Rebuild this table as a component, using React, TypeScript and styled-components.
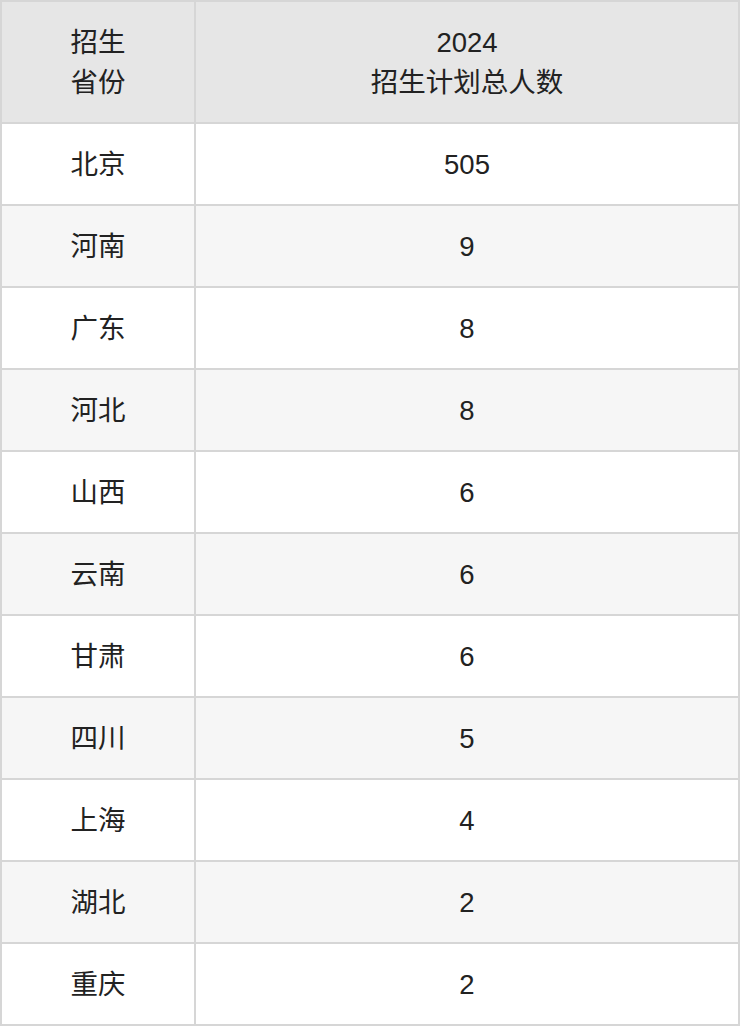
import React from "react";
import styled, { createGlobalStyle } from "styled-components";

const rows: [string, number][] = [
  ["北京", 505],
  ["河南", 9],
  ["广东", 8],
  ["河北", 8],
  ["山西", 6],
  ["云南", 6],
  ["甘肃", 6],
  ["四川", 5],
  ["上海", 4],
  ["湖北", 2],
  ["重庆", 2],
];

const App = () => {
  return (
    <>
      <GlobalStyle />
      <StTable>
        <thead>
          <tr>
            <StHeadCell $width={192}>
              招生
              <br />
              省份
            </StHeadCell>
            <StHeadCell>
              2024
              <br />
              招生计划总人数
            </StHeadCell>
          </tr>
        </thead>
        <tbody>
          {rows.map(([province, count], i) => (
            <StRow key={province} $striped={i % 2 === 1}>
              <StCell>{province}</StCell>
              <StCell>{count}</StCell>
            </StRow>
          ))}
        </tbody>
      </StTable>
    </>
  );
};

export default App;

const GlobalStyle = createGlobalStyle`
  html, body {
    margin: 0;
    padding: 0;
    background: #ffffff;
  }
  body {
    font-family: "Liberation Sans", "Noto Sans CJK SC", sans-serif;
    color: #222222;
  }
`;

const StTable = styled.table`
  width: 740px;
  border-collapse: separate;
  border-spacing: 0;
  table-layout: fixed;
  border-top: 2px solid #d6d6d6;
  border-left: 2px solid #d6d6d6;
`;

const StHeadCell = styled.th<{ $width?: number }>`
  box-sizing: border-box;
  width: ${({ $width }) => ($width ? `${$width + 2}px` : "auto")};
  height: 122px;
  padding: 2px 0 0;
  background: #e6e6e6;
  border-right: 2px solid #d6d6d6;
  border-bottom: 2px solid #d6d6d6;
  font-size: 27.5px;
  font-weight: 400;
  line-height: 40px;
  text-align: center;
  vertical-align: middle;
  color: #222222;
`;

const StRow = styled.tr<{ $striped: boolean }>`
  background: ${({ $striped }) => ($striped ? "#f6f6f6" : "#ffffff")};
`;

const StCell = styled.td`
  box-sizing: border-box;
  height: 82px;
  padding: 2px 0 0;
  border-right: 2px solid #d6d6d6;
  border-bottom: 2px solid #d6d6d6;
  font-size: 27.5px;
  line-height: 40px;
  text-align: center;
  vertical-align: middle;
  color: #222222;
`;
